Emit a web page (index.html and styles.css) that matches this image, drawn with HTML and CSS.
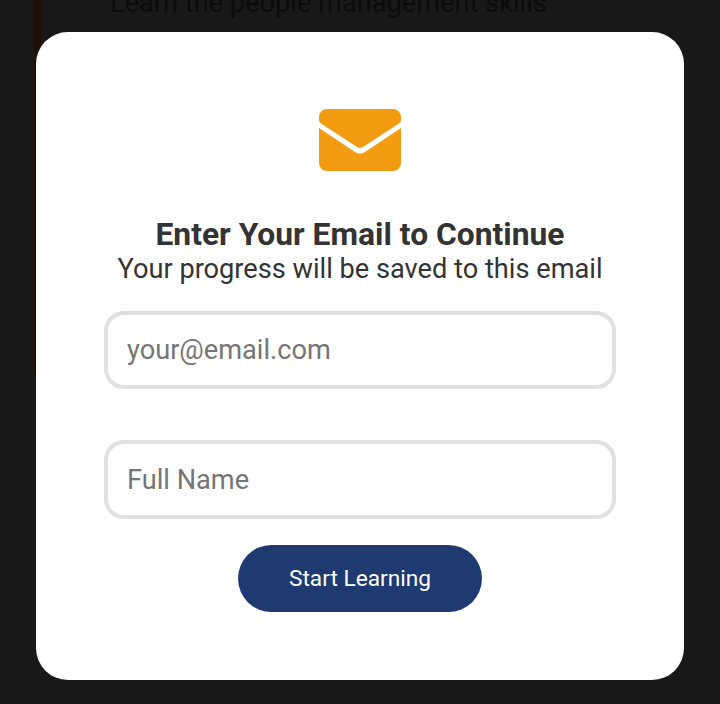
FILE: index.html
```html
<!DOCTYPE html>
<html lang="en">
<head>
<meta charset="utf-8">
<title>Enter Your Email</title>
<link rel="stylesheet" href="styles.css">
</head>
<body>
<div class="page">
  <div class="accent"></div>
  <p class="behind">Learn the people management skills</p>
</div>
<div class="overlay">
  <form class="modal">
    <svg class="icon" viewBox="0 0 82 62" width="82" height="62" aria-hidden="true">
      <path class="icon-body" d="M8 0H74A8 8 0 0 1 82 8V11Q82 13 80 14.500L44 38Q41 40 38 38L2 14.500Q0 13 0 11V8A8 8 0 0 1 8 0Z"/>
      <path class="icon-body" d="M0 19L36 43Q41 46.500 46 43L82 19V54A8 8 0 0 1 74 62H8A8 8 0 0 1 0 54Z"/>
    </svg>
    <h1 class="title">Enter Your Email to Continue</h1>
    <p class="subtitle">Your progress will be saved to this email</p>
    <input class="field field-email" type="email" placeholder="your@email.com">
    <input class="field field-name" type="text" placeholder="Full Name">
    <button class="submit" type="button">Start Learning</button>
  </form>
</div>
</body>
</html>
```
FILE: styles.css
```css
* {
  box-sizing: border-box;
}

html,
body {
  margin: 0;
  height: 100%;
  overflow: hidden;
  background: #181818;
  font-family: Roboto, "Liberation Sans", sans-serif;
}

.page {
  display: flex;
  gap: 68px;
  height: 100%;
  padding-left: 34px;
}

.accent {
  width: 8px;
  height: 378px;
  background: #1d1005;
}

.behind {
  margin: -15px 0 0;
  font-size: 27.2px;
  line-height: 36px;
  color: #0b0b0b;
}

.overlay {
  position: fixed;
  inset: 0;
  display: flex;
  align-items: flex-start;
  justify-content: center;
  padding-top: 32px;
}

.modal {
  display: flex;
  flex-direction: column;
  align-items: center;
  width: 648px;
  height: 648px;
  padding: 77px 68px 0;
  border-radius: 32px;
  background: #fff;
}

.icon {
  display: block;
  flex: none;
}

.icon-body {
  fill: #f39c12;
}

.title {
  margin: 45px 0 0;
  font-size: 31.8px;
  line-height: 36px;
  font-weight: 700;
  color: #333;
  white-space: nowrap;
}

.subtitle {
  margin: -1px 0 0;
  font-size: 27.2px;
  line-height: 36px;
  color: #333;
  white-space: nowrap;
}

.field {
  display: block;
  flex: none;
  width: 512px;
  height: 78px;
  padding: 0 19px;
  border: 4px solid #e0e0e0;
  border-radius: 20px;
  outline: none;
  background: #fff;
  font-family: inherit;
  font-size: 27.2px;
  color: #333;
}

.field::placeholder {
  color: #757575;
  opacity: 1;
}

.field-email {
  margin-top: 24px;
}

.field-name {
  height: 79px;
  margin-top: 51px;
}

.submit {
  width: 244px;
  height: 67px;
  margin-top: 26px;
  border: 0;
  border-radius: 34px;
  background: #1e3a70;
  color: #fff;
  font-family: inherit;
  font-size: 22.7px;
  font-weight: 400;
}
```
